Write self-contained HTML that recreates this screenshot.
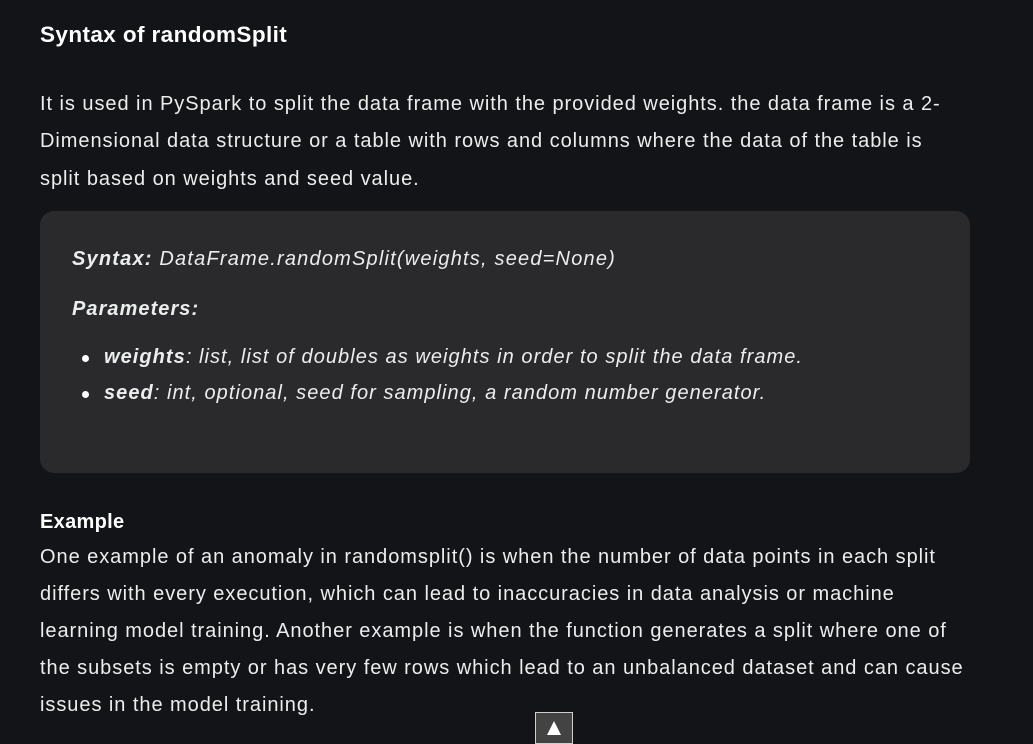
<!DOCTYPE html>
<html><head><meta charset="utf-8"><style>
html,body{margin:0;padding:0;width:1033px;height:734px;overflow:hidden;background:#131417;color:#eceded;font-family:"Liberation Sans",sans-serif;}
.t{position:absolute;left:40px;white-space:nowrap;font-size:20px;letter-spacing:0.95px;}
h2{position:absolute;left:40px;top:22px;margin:0;font-size:22.5px;font-weight:bold;color:#fff;letter-spacing:0.4px;}
.box{position:absolute;left:40px;top:211px;width:930px;height:262px;background:#2a2a2c;border-radius:14px;}
.i{font-style:italic;letter-spacing:1.05px;}
.btn{position:absolute;left:535px;top:712px;width:36px;height:30px;background:#434343;border:1px solid #cfcfcf;}
.tri{position:absolute;left:11px;top:8px;width:0;height:0;border-left:7px solid transparent;border-right:7px solid transparent;border-bottom:14px solid #fff;}
.b{position:absolute;left:82px;width:7px;height:7px;border-radius:50%;background:#fff;}
</style></head><body>
<h2>Syntax of randomSplit</h2>
<div class="t" style="top:93px">It is used in PySpark to split the data frame with the provided weights. the data frame is a 2-</div>
<div class="t" style="top:130px">Dimensional data structure or a table with rows and columns where the data of the table is</div>
<div class="t" style="top:168px">split based on weights and seed value.</div>
<div class="box"></div>
<div class="t i" style="left:72px;top:248px;letter-spacing:1.2px"><b>Syntax:</b> DataFrame.randomSplit(weights, seed=None)</div>
<div class="t i" style="left:72px;top:298px"><b>Parameters:</b></div>
<div class="b" style="top:355px"></div>
<div class="b" style="top:391px"></div>
<div class="t i" style="left:104px;top:346px"><b>weights</b>: list, list of doubles as weights in order to split the data frame.</div>
<div class="t i" style="left:104px;top:382px"><b>seed</b>: int, optional, seed for sampling, a random number generator.</div>
<div class="t" style="top:511px;font-weight:bold;color:#fff;letter-spacing:0.3px">Example</div>
<div class="t" style="top:546px">One example of an anomaly in randomsplit() is when the number of data points in each split</div>
<div class="t" style="top:583px">differs with every execution, which can lead to inaccuracies in data analysis or machine</div>
<div class="t" style="top:620px">learning model training. Another example is when the function generates a split where one of</div>
<div class="t" style="top:657px">the subsets is empty or has very few rows which lead to an unbalanced dataset and can cause</div>
<div class="t" style="top:694px">issues in the model training.</div>
<div class="btn"><div class="tri"></div></div>
</body></html>
